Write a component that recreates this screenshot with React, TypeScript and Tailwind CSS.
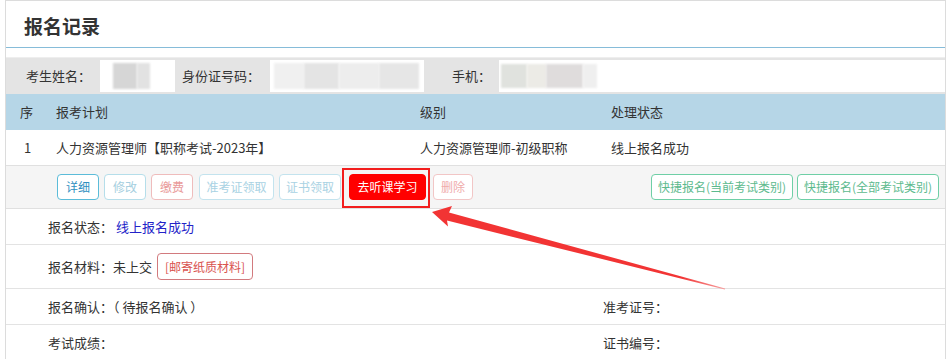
import React from 'react';

const font = { fontFamily: '"Noto Sans CJK SC", "Noto Sans", sans-serif' };

interface BtnProps {
  label: string;
  width: string;
  tone: string;
  className?: string;
}

const ActionButton: React.FC<BtnProps> = ({ label, width, tone, className }) => (
  <button
    className={`h-[26px] ${width} ${tone} rounded-[4px] border text-[12px] leading-none flex items-center justify-center ${className ?? ''}`}
  >
    {label}
  </button>
);

const BlurBox: React.FC<{ className: string; children?: React.ReactNode }> = ({
  className,
  children,
}) => <div className={`h-[32px] bg-white flex items-center ${className}`}>{children}</div>;

const App: React.FC = () => {
  return (
    <div className="relative w-[950px] h-[359px] overflow-hidden bg-white text-[#333]" style={font}>
      <div className="ml-[5px] w-[941px] h-full border-x border-t border-[#dcdcdc]">
        {/* Title */}
        <div className="h-[47px] border-b border-[#86bcd9] flex items-center pl-[18px]">
          <h1 className="text-[19px] font-bold text-[#333] leading-none mt-[2px]">报名记录</h1>
        </div>

        {/* Student info */}
        <div className="mt-[9px] h-[37px] bg-[#e4e4e4] border-t border-[#eeeeee] flex items-center text-[13px]">
          <span className="ml-[20px] w-[74px]">考生姓名：</span>
          <BlurBox className="w-[75px] pl-[13px]">
            <div className="w-[24px] h-[26px] bg-[#d6d6d6] blur-[1px]" />
            <div className="w-[13px] h-[26px] bg-[#e2e2e2] blur-[1px]" />
          </BlurBox>
          <span className="ml-[7px] w-[88px]">身份证号码：</span>
          <BlurBox className="w-[154px] pl-[4px]">
            <div className="w-[30px] h-[26px] bg-[#f0f0f0] blur-[1px]" />
            <div className="w-[35px] h-[26px] bg-[#e4e4e4] blur-[1px]" />
            <div className="w-[40px] h-[26px] bg-[#ededed] blur-[1px]" />
            <div className="w-[40px] h-[26px] bg-[#e6e6e6] blur-[1px]" />
          </BlurBox>
          <span className="ml-[28px] w-[47px]">手机：</span>
          <BlurBox className="flex-1 pl-[2px]">
            <div className="w-[26px] h-[24px] bg-[#e0e2de] blur-[1px]" />
            <div className="w-[19px] h-[24px] bg-[#ecebe6] blur-[1px]" />
            <div className="w-[37px] h-[24px] bg-[#dfdcdc] blur-[1px]" />
            <div className="w-[14px] h-[24px] bg-[#efefef] blur-[1px]" />
          </BlurBox>
        </div>

        {/* Table header */}
        <div className="h-[36px] bg-[#b6d6e7] flex items-center text-[13px]">
          <span className="ml-[14px] w-[36px]">序</span>
          <span className="w-[364px]">报考计划</span>
          <span className="w-[191px]">级别</span>
          <span>处理状态</span>
        </div>

        {/* Row */}
        <div className="h-[35px] flex items-center text-[13px]">
          <span className="ml-[18px] w-[32px]">1</span>
          <span className="w-[364px]">人力资源管理师【职称考试-2023年】</span>
          <span className="w-[191px]">人力资源管理师-初级职称</span>
          <span>线上报名成功</span>
        </div>

        {/* Buttons row */}
        <div className="h-[44px] bg-[#f5f5f5] border-y border-[#e0e0e0] flex items-center justify-between pl-[51px] pr-[6px]">
          <div className="flex items-center">
            <ActionButton label="详细" width="w-[42px]" tone="border-[#5bbcd9] text-[#2f8fbf] bg-white" />
            <ActionButton label="修改" width="w-[42px]" tone="border-[#b5deea] text-[#a6cfe0] bg-white" className="ml-[5px]" />
            <ActionButton label="缴费" width="w-[42px]" tone="border-[#efbcbc] text-[#e99a9a] bg-white" className="ml-[5px]" />
            <ActionButton label="准考证领取" width="w-[75px]" tone="border-[#c3e3ee] text-[#a9d2e3] bg-white" className="ml-[6px]" />
            <ActionButton label="证书领取" width="w-[62px]" tone="border-[#c3e3ee] text-[#a9d2e3] bg-white" className="ml-[5px]" />
            <span className="relative ml-[8px]">
              <ActionButton label="去听课学习" width="w-[77px]" tone="border-[#ff0000] bg-[#ff0000] text-white" />
              <span className="absolute left-[-7px] top-[-6px] w-[88px] h-[40px] border-2 border-[#f21d1d]" />
            </span>
            <ActionButton label="删除" width="w-[40px]" tone="border-[#f2c6c6] text-[#efabab] bg-white" className="ml-[7px]" />
          </div>
          <div className="flex items-center gap-[4px]">
            <ActionButton label="快捷报名(当前考试类别)" width="w-[142px]" tone="border-[#6fcfa6] text-[#5dba8e] bg-white" />
            <ActionButton label="快捷报名(全部考试类别)" width="w-[142px]" tone="border-[#6fcfa6] text-[#5dba8e] bg-white" />
          </div>
        </div>

        {/* Detail rows */}
        <div className="h-[36px] border-b border-[#e3e3e3] flex items-center pl-[42px] text-[13px]">
          <span>报名状态：</span>
          <span className="ml-[3px] text-[#2323c8]">线上报名成功</span>
        </div>
        <div className="h-[44px] border-b border-[#e3e3e3] flex items-center pl-[42px] text-[13px]">
          <span>报名材料：未上交</span>
          <button className="ml-[5px] h-[27px] w-[96px] rounded-[4px] border border-[#d27a7e] text-[#d9534f] text-[12px] leading-none bg-white">
            [邮寄纸质材料]
          </button>
        </div>
        <div className="h-[36px] border-b border-[#e3e3e3] flex items-center pl-[42px] text-[13px]">
          <span className="w-[555px] whitespace-pre">报名确认：（ 待报名确认 ）</span>
          <span>准考证号：</span>
        </div>
        <div className="h-[36px] flex items-center pl-[42px] text-[13px]">
          <span className="w-[555px]">考试成绩：</span>
          <span>证书编号：</span>
        </div>
      </div>

      {/* Annotation arrow */}
      <svg className="absolute left-0 top-0 pointer-events-none" width="950" height="359" viewBox="0 0 950 359">
        <defs>
          <linearGradient id="arrowFade" x1="432" y1="212" x2="725" y2="289" gradientUnits="userSpaceOnUse">
            <stop offset="0" stopColor="#f23434" />
            <stop offset="0.85" stopColor="#f23434" />
            <stop offset="1" stopColor="#f7a0a0" />
          </linearGradient>
        </defs>
        <polygon
          points="432,212 452,206 449,212.5 725.1,288.5 724.9,289.5 447,220.5 448,226.5"
          fill="url(#arrowFade)"
        />
      </svg>
    </div>
  );
};

export default App;
